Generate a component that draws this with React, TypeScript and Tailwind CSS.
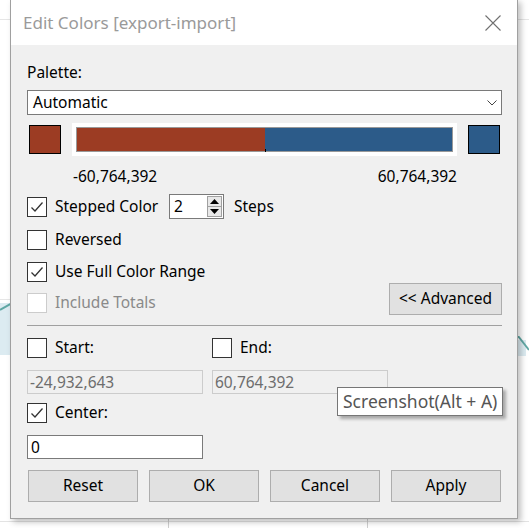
const font = { fontFamily: '"Noto Sans", "Open Sans", sans-serif' };

const Check = ({ checked, disabled }: { checked?: boolean; disabled?: boolean }) => (
  <div
    className={`w-[20px] h-[20px] shrink-0 flex items-center justify-center bg-white border ${
      disabled ? 'border-[#cccccc]' : 'border-[#333333]'
    }`}
  >
    {checked && (
      <svg width="14" height="12" viewBox="0 0 14 12">
        <path d="M1.5 6.5 L5 10 L12.5 1.5" fill="none" stroke="#333" strokeWidth="1.3" />
      </svg>
    )}
  </div>
);

const Btn = ({ label, w }: { label: string; w: string }) => (
  <div className={`${w} h-[32px] bg-[#e1e1e1] border border-[#adadad] flex items-center justify-center text-[15.5px] text-black`}>
    {label}
  </div>
);

const App = () => {
  return (
    <div className="relative w-[529px] h-[528px] bg-white overflow-hidden" style={font}>
      {/* background sheet behind the dialog */}
      <div className="absolute left-0 right-0 top-[19px] h-px bg-[#e6e6e6]" />
      <div className="absolute left-0 w-[10px] top-[299px] h-px bg-[#e6e6e6]" />
      <div className="absolute left-0 right-0 top-[521px] h-px bg-[#e3e3e3]" />
      <div className="absolute left-[168px] top-[519px] bottom-0 w-px bg-[#cfcfcf]" />
      <div className="absolute left-[367px] top-[519px] bottom-0 w-px bg-[#cfcfcf]" />
      <div className="absolute left-0 w-[10px] top-[303px] h-[52px] bg-[#dcebf1]" />
      <svg className="absolute left-0 top-[300px]" width="12" height="12">
        <path d="M0 10 L12 3" stroke="#5fa7a4" strokeWidth="2" />
      </svg>
      <div className="absolute left-[518px] top-[340px] w-[8px] h-[16px] bg-[#dcebf1]" />
      <svg className="absolute left-[518px] top-[336px]" width="11" height="16">
        <path d="M0 0 L11 14" stroke="#5fa7a4" strokeWidth="2" />
      </svg>

      {/* dialog */}
      <div className="relative ml-[10px] w-[508px] h-[520px] -mt-px border border-[#a0a0a0] bg-[#f0f0f0] shadow-[3px_3px_6px_rgba(0,0,0,0.25)] flex flex-col">
        <div className="h-[45px] bg-white flex items-center justify-between pl-[12px] pr-[16px] shrink-0">
          <span className="text-[17px] text-[#9a9a9a]">Edit Colors [export-import]</span>
          <svg width="16" height="16" viewBox="0 0 16 16">
            <path d="M0.5 0.5 L15.5 15.5 M15.5 0.5 L0.5 15.5" stroke="#707070" strokeWidth="1.1" />
          </svg>
        </div>

        <div className="flex flex-col pl-[16px] pr-[15px] text-[15.5px] text-black">
          <div className="mt-[17px] h-[20px] leading-[20px]">Palette:</div>

          <div className="mt-[8px] h-[25px] bg-white border border-[#7a7a7a] flex items-center justify-between pl-[5px] pr-[4px]">
            <span>Automatic</span>
            <svg width="10" height="6" viewBox="0 0 10 6">
              <path d="M0.5 0.5 L5 5 L9.5 0.5" fill="none" stroke="#444" strokeWidth="1" />
            </svg>
          </div>

          <div className="mt-[8px] h-[33px] flex items-center">
            <div className="ml-[2px] w-[32px] h-[29px] bg-[#9c3c23] border border-black" />
            <div className="ml-[11px] w-[385px] h-[33px] bg-white p-[4px]">
              <div className="relative w-full h-full flex border border-[#999999]">
                <div className="flex-1 bg-[#9c3c23]" />
                <div className="flex-1 bg-[#2c5b89]" />
                <div className="absolute left-1/2 bottom-[-1px] w-px h-[3px] bg-black" />
              </div>
            </div>
            <div className="ml-[11px] w-[32px] h-[29px] bg-[#2c5b89] border border-black" />
          </div>

          <div className="mt-[10px] h-[20px] leading-[20px] flex justify-between pl-[46px] pr-[45px]">
            <span>-60,764,392</span>
            <span>60,764,392</span>
          </div>

          <div className="mt-[8px] h-[25px] flex items-center">
            <Check checked />
            <span className="ml-[8px] w-[114px]">Stepped Color</span>
            <div className="w-[55px] h-[25px] bg-white border border-[#7a7a7a] flex items-center justify-between pl-[4px] pr-[1px]">
              <span>2</span>
              <div className="w-[15px] h-[21px] flex flex-col border border-[#a0a0a0]">
                <div className="flex-1 bg-[#e8e8e8] flex items-center justify-center border-b border-[#a0a0a0]">
                  <svg width="9" height="5" viewBox="0 0 9 5"><path d="M4.5 0 L9 5 L0 5 Z" fill="#000" /></svg>
                </div>
                <div className="flex-1 bg-[#e8e8e8] flex items-center justify-center">
                  <svg width="9" height="5" viewBox="0 0 9 5"><path d="M0 0 L9 0 L4.5 5 Z" fill="#000" /></svg>
                </div>
              </div>
            </div>
            <span className="ml-[10px]">Steps</span>
          </div>

          <div className="mt-[10px] h-[21px] flex items-center">
            <Check />
            <span className="ml-[8px]">Reversed</span>
          </div>

          <div className="mt-[11px] h-[21px] flex items-center">
            <Check checked />
            <span className="ml-[8px]">Use Full Color Range</span>
          </div>

          <div className="mt-px h-[32px] flex items-center justify-between">
            <div className="flex items-center mt-[8px]">
              <Check disabled />
              <span className="ml-[8px] text-[#8a8a8a]">Include Totals</span>
            </div>
            <Btn label="<< Advanced" w="w-[113px]" />
          </div>

          <div className="mt-[10px] h-px bg-[#a0a0a0]" />

          <div className="mt-[12px] h-[20px] flex items-center">
            <Check />
            <span className="ml-[8px] w-[157px]">Start:</span>
            <Check />
            <span className="ml-[8px]">End:</span>
          </div>

          <div className="mt-[12px] h-[24px] flex gap-[9px]">
            <div className="w-[176px] h-[24px] border border-[#cccccc] text-[#6d6d6d] pl-[2px] leading-[22px]">-24,932,643</div>
            <div className="w-[176px] h-[24px] border border-[#cccccc] text-[#6d6d6d] pl-[2px] leading-[22px]">60,764,392</div>
          </div>

          <div className="mt-[9px] h-[20px] flex items-center">
            <Check checked />
            <span className="ml-[8px]">Center:</span>
          </div>

          <div className="mt-[12px] w-[176px] h-[24px] bg-white border border-[#7a7a7a] pl-[3px] leading-[22px]">0</div>

          <div className="mt-[11px] ml-px flex gap-[11px]">
            <Btn label="Reset" w="w-[110px]" />
            <Btn label="OK" w="w-[110px]" />
            <Btn label="Cancel" w="w-[110px]" />
            <Btn label="Apply" w="w-[110px]" />
          </div>
        </div>
      </div>

      {/* tooltip */}
      <div className="absolute left-[337px] top-[387px] w-[166px] h-[29px] bg-white border border-[#767676] shadow-[3px_3px_3px_rgba(0,0,0,0.3)] flex items-center pl-[5px] text-[17.5px] text-[#555555] whitespace-nowrap">
        Screenshot(Alt + A)
      </div>
    </div>
  );
};

export default App;
